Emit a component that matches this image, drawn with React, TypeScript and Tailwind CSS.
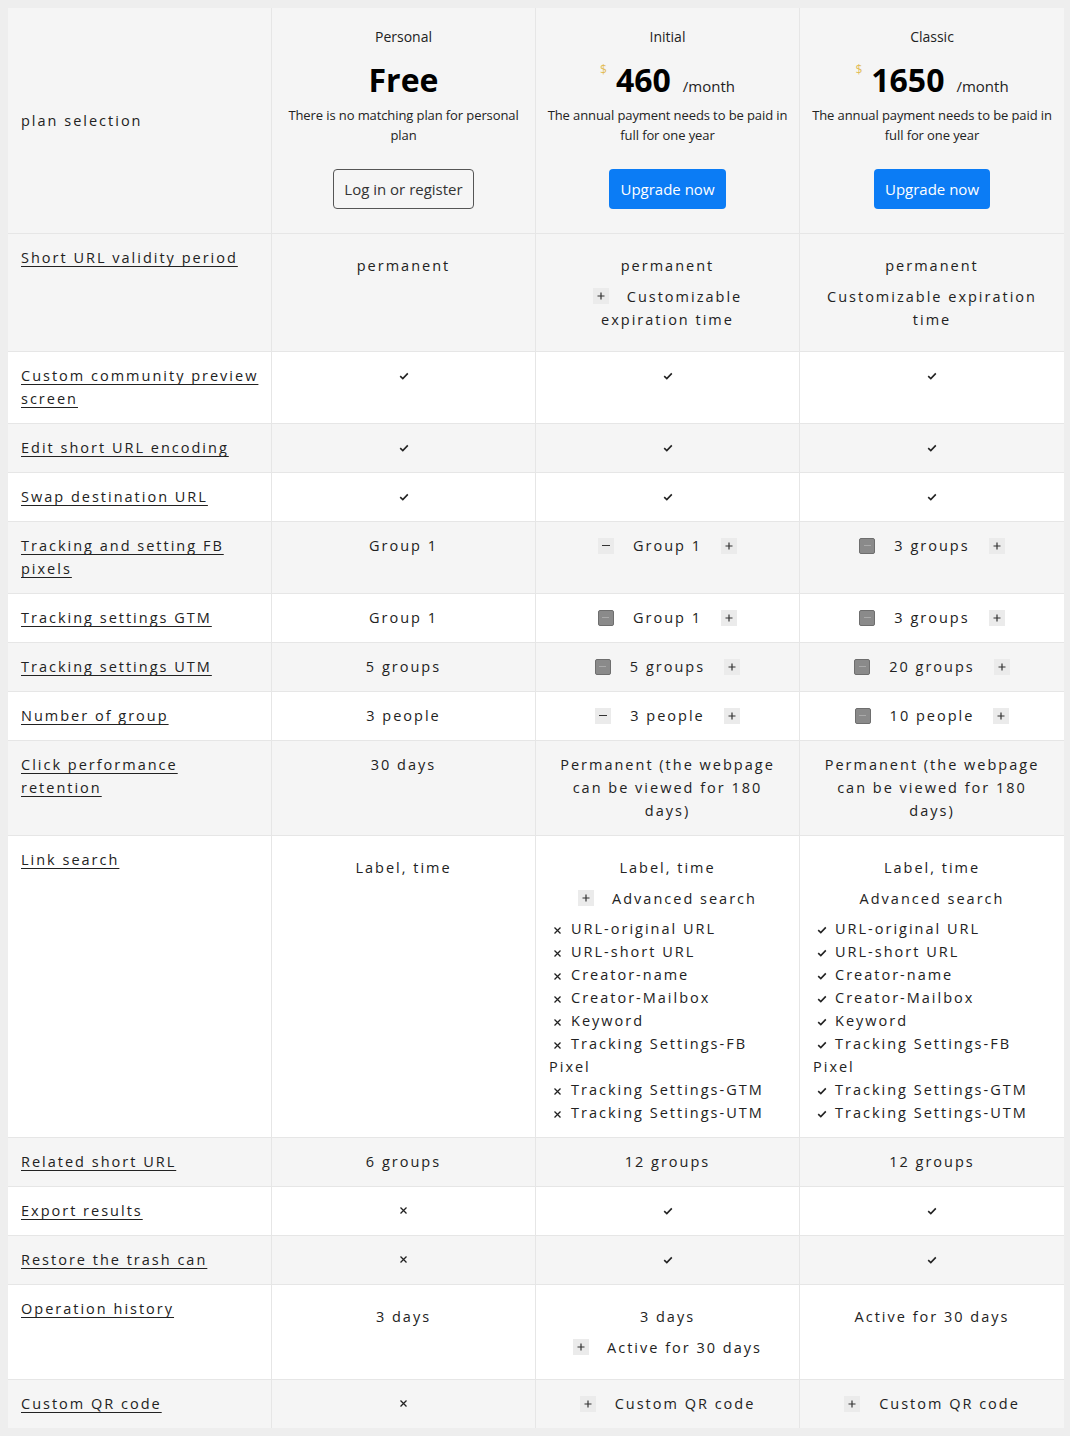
import type { ReactNode } from "react";

const BODY = "font-['Open_Sans',sans-serif] text-[14.5px] leading-[23px] tracking-[2px] text-[#222]";

function CheckIcon() {
  return (
    <svg width="10" height="8" viewBox="0 0 10 8" className="inline-block">
      <path d="M1.2 4.2 3.8 6.6 8.8 1.4" fill="none" stroke="#222" strokeWidth="1.6" />
    </svg>
  );
}

function CrossIcon() {
  return (
    <svg width="9" height="9" viewBox="0 0 9 9" className="inline-block">
      <path d="M1.5 1.5 7.5 7.5M7.5 1.5 1.5 7.5" fill="none" stroke="#222" strokeWidth="1.3" />
    </svg>
  );
}

function PlusBox({ inline }: { inline?: boolean }) {
  return (
    <span
      className={`inline-flex h-4 w-4 flex-none items-center justify-center bg-[#ebebeb] ${
        inline ? "mt-[3px] align-top" : ""
      }`}
    >
      <svg width="8" height="8" viewBox="0 0 8 8">
        <path d="M4 0.5v7M0.5 4h7" stroke="#333" strokeWidth="1.2" />
      </svg>
    </span>
  );
}

function MinusBox({ dark }: { dark?: boolean }) {
  if (dark) {
    return (
      <span className="inline-flex h-4 w-4 flex-none items-center justify-center rounded-[2px] border border-[#6e6e6e] bg-[#8a8a8a]">
        <span className="h-px w-[7px] bg-[#a9a9a9]" />
      </span>
    );
  }
  return (
    <span className="inline-flex h-4 w-4 flex-none items-center justify-center bg-[#ebebeb]">
      <span className="h-[1.3px] w-[8px] bg-[#333]" />
    </span>
  );
}

function Mark({ type }: { type: "check" | "cross" }) {
  return (
    <div className="flex h-[23px] items-center justify-center">
      {type === "check" ? <CheckIcon /> : <CrossIcon />}
    </div>
  );
}

function Para({ children, plus }: { children: ReactNode; plus?: boolean }) {
  return (
    <p className="mt-2 mb-[7px]">
      {plus && (
        <>
          <PlusBox inline />
          <span className="inline-block w-[18px]" />
        </>
      )}
      {children}
    </p>
  );
}

function PlusLine({ children }: { children: ReactNode }) {
  return (
    <div className="flex h-[23px] items-center justify-center gap-[19px]">
      <PlusBox />
      <span>{children}</span>
    </div>
  );
}

function Stepper({ text, dark }: { text: string; dark?: boolean }) {
  return (
    <div className="flex h-[23px] items-center justify-center gap-[19px]">
      <MinusBox dark={dark} />
      <span>{text}</span>
      <PlusBox />
    </div>
  );
}

function SearchList({ mark }: { mark: "check" | "cross" }) {
  const items = [
    "URL-original URL",
    "URL-short URL",
    "Creator-name",
    "Creator-Mailbox",
    "Keyword",
    "Tracking Settings-FB\nPixel",
    "Tracking Settings-GTM",
    "Tracking Settings-UTM",
  ];
  return (
    <ul className="text-left whitespace-nowrap">
      {items.map((item) => {
        const [first, rest] = item.split("\n");
        return (
          <li key={item}>
            <span className="ml-1 mr-[9px] inline-block w-[9px]">
              {mark === "check" ? <CheckIcon /> : <CrossIcon />}
            </span>
            {first}
            {rest && (
              <>
                <br />
                {rest}
              </>
            )}
          </li>
        );
      })}
    </ul>
  );
}

function PlanHeader({
  name,
  price,
  note,
  action,
}: {
  name: string;
  price: ReactNode;
  note: ReactNode;
  action: ReactNode;
}) {
  return (
    <div className="flex flex-col items-center bg-[#f5f5f5] px-2 pt-[19px] pb-6 text-center font-['Open_Sans',sans-serif] tracking-normal text-[#222]">
      <div className="text-[14px] leading-5">{name}</div>
      <div className="mt-[11px] flex h-[44px] items-center">{price}</div>
      <div className="mt-[3px] text-[13px] leading-5 tracking-[-0.1px] whitespace-nowrap">{note}</div>
      <div className="mt-6">{action}</div>
    </div>
  );
}

function Price({ amount }: { amount: string }) {
  return (
    <div className="flex items-end">
      <span className="mb-[26px] mr-[9px] text-[12px] leading-none text-[#e2bc55]">$</span>
      <span className="text-[32px] leading-[44px] font-bold text-black">{amount}</span>
      <span className="mb-[6px] ml-[12px] text-[15px] leading-5">/month</span>
    </div>
  );
}

type Row = {
  label: ReactNode;
  cells: ReactNode[];
};

const rows: Row[] = [
  {
    label: "Short URL validity period",
    cells: [
      <Para>permanent</Para>,
      <>
        <Para>permanent</Para>
        <Para plus>
          Customizable
          <br />
          expiration time
        </Para>
      </>,
      <>
        <Para>permanent</Para>
        <Para>
          Customizable expiration
          <br />
          time
        </Para>
      </>,
    ],
  },
  {
    label: (
      <>
        Custom community preview
        <br />
        screen
      </>
    ),
    cells: [<Mark type="check" />, <Mark type="check" />, <Mark type="check" />],
  },
  {
    label: "Edit short URL encoding",
    cells: [<Mark type="check" />, <Mark type="check" />, <Mark type="check" />],
  },
  {
    label: "Swap destination URL",
    cells: [<Mark type="check" />, <Mark type="check" />, <Mark type="check" />],
  },
  {
    label: (
      <>
        Tracking and setting FB
        <br />
        pixels
      </>
    ),
    cells: [<div>Group 1</div>, <Stepper text="Group 1" />, <Stepper text="3 groups" dark />],
  },
  {
    label: "Tracking settings GTM",
    cells: [<div>Group 1</div>, <Stepper text="Group 1" dark />, <Stepper text="3 groups" dark />],
  },
  {
    label: "Tracking settings UTM",
    cells: [<div>5 groups</div>, <Stepper text="5 groups" dark />, <Stepper text="20 groups" dark />],
  },
  {
    label: "Number of group",
    cells: [<div>3 people</div>, <Stepper text="3 people" />, <Stepper text="10 people" dark />],
  },
  {
    label: (
      <>
        Click performance
        <br />
        retention
      </>
    ),
    cells: [
      <div>30 days</div>,
      <div>
        Permanent (the webpage
        <br />
        can be viewed for 180
        <br />
        days)
      </div>,
      <div>
        Permanent (the webpage
        <br />
        can be viewed for 180
        <br />
        days)
      </div>,
    ],
  },
  {
    label: "Link search",
    cells: [
      <Para>Label, time</Para>,
      <>
        <Para>Label, time</Para>
        <Para plus>Advanced search</Para>
        <SearchList mark="cross" />
      </>,
      <>
        <Para>Label, time</Para>
        <Para>Advanced search</Para>
        <SearchList mark="check" />
      </>,
    ],
  },
  {
    label: "Related short URL",
    cells: [<div>6 groups</div>, <div>12 groups</div>, <div>12 groups</div>],
  },
  {
    label: "Export results",
    cells: [<Mark type="cross" />, <Mark type="check" />, <Mark type="check" />],
  },
  {
    label: "Restore the trash can",
    cells: [<Mark type="cross" />, <Mark type="check" />, <Mark type="check" />],
  },
  {
    label: "Operation history",
    cells: [
      <Para>3 days</Para>,
      <>
        <Para>3 days</Para>
        <Para plus>Active for 30 days</Para>
      </>,
      <Para>Active for 30 days</Para>,
    ],
  },
  {
    label: "Custom QR code",
    cells: [<Mark type="cross" />, <PlusLine>Custom QR code</PlusLine>, <PlusLine>Custom QR code</PlusLine>],
  },
];

export default function App() {
  return (
    <div className="min-h-[1436px] bg-[#eeeeee] p-2">
      <div className={`grid w-fit grid-cols-[263px_263px_263px_264px] gap-px bg-[#e6e6e6] ${BODY}`}>
        <div className="flex items-center bg-[#f5f5f5] px-[13px]">plan selection</div>
        <PlanHeader
          name="Personal"
          price={<span className="text-[32px] leading-[44px] font-bold text-black">Free</span>}
          note={
            <>
              There is no matching plan for personal
              <br />
              plan
            </>
          }
          action={
            <button
              type="button"
              className="h-10 rounded-[4px] border border-[#555] px-[10px] text-[15px] text-[#333]"
            >
              Log in or register
            </button>
          }
        />
        {[
          { name: "Initial", amount: "460" },
          { name: "Classic", amount: "1650" },
        ].map((plan) => (
          <PlanHeader
            key={plan.name}
            name={plan.name}
            price={<Price amount={plan.amount} />}
            note={
              <>
                The annual payment needs to be paid in
                <br />
                full for one year
              </>
            }
            action={
              <button
                type="button"
                className="h-10 rounded-[4px] bg-[#0b7cf5] px-[11px] text-[15px] text-white"
              >
                Upgrade now
              </button>
            }
          />
        ))}

        {rows.map((row, index) => {
          const bg = index % 2 === 0 ? "bg-[#f5f5f5]" : "bg-white";
          return [
            <div key={`l${index}`} className={`${bg} px-[13px] pt-3 pb-[13px] whitespace-nowrap`}>
              <span className="underline decoration-1 underline-offset-[3px]">{row.label}</span>
            </div>,
            ...row.cells.map((cell, cellIndex) => (
              <div key={`c${index}-${cellIndex}`} className={`${bg} px-[13px] pt-3 pb-[13px] text-center`}>
                {cell}
              </div>
            )),
          ];
        })}
      </div>
    </div>
  );
}
